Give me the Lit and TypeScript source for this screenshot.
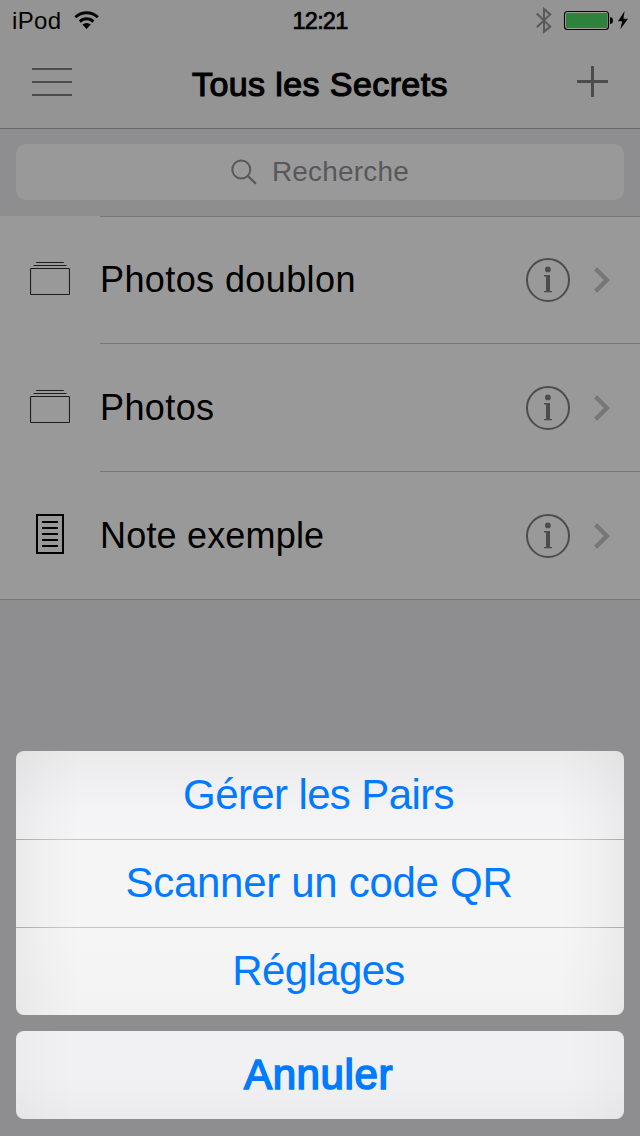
import { LitElement, html, css, svg } from "lit";
import { customElement, property } from "lit/decorators.js";

type Kind = "photos" | "note";

const photosIcon = svg`
  <path d="M6.2 .5H33.8M3.6 3.5H36.4" stroke="#1c1c1c" stroke-width="1.1" />
  <rect x=".5" y="6.5" width="39" height="26" rx=".8" fill="none" stroke="#1c1c1c" stroke-width="1.15" />`;

const noteIcon = svg`
  <rect x="7" y="1" width="26" height="38" fill="none" stroke="#000" stroke-width="2" />
  <path d="M12 8H28M12 14H28M12 20H28M12 26H28M12 32H28" stroke="#000" stroke-width="2" />`;

@customElement("status-bar")
class StatusBar extends LitElement {
  static styles = css`
    :host {
      display: grid;
      grid-template-columns: 1fr auto 1fr;
      grid-template-rows: 40px;
      align-items: center;
      height: 40px;
      padding: 0 12px;
      font-size: 24px;
      line-height: 40px;
    }
    .left, .right { display: flex; align-items: center; height: 40px; }
    .right { justify-content: flex-end; }
    .carrier { letter-spacing: 0.35px; width: 61px; padding-top: 2px; }
    .time { padding-top: 2px; font-size: 23.5px; -webkit-text-stroke: 0.7px #000; letter-spacing: -0.8px; }
    svg { display: block; }
  `;
  render() {
    return html`
      <div class="left">
        <span class="carrier">iPod</span>
        <svg width="28" height="40" viewBox="73 0 28 40">
          <g fill="none" stroke="#000" stroke-width="2.9">
            <path d="M75.4 17.3A16 16 0 0 1 97.8 17.3" />
            <path d="M79.8 21.6A9.7 9.7 0 0 1 93.4 21.6" />
          </g>
          <path d="M82.4 24.6A6 6 0 0 1 90.8 24.6L86.6 29Z" />
        </svg>
      </div>
      <span class="time">12:21</span>
      <div class="right">
        <svg width="94" height="40" viewBox="534 0 94 40">
          <path d="M536.8 13.4L550.2 26.6L544 31.8V9L550.2 14.4L536.8 27.2" fill="none" stroke="#5a5a5a" stroke-width="2.1" />
          <rect x="564.5" y="11.5" width="44" height="18" rx="3" fill="#9e9e9e" stroke="#000" stroke-width="1.1" />
          <rect x="566" y="13" width="41.5" height="15" rx="1.4" fill="#2f823c" />
          <path d="M610 17.3h1.2q1.8 .6 1.8 3.2t-1.8 3.3H610Z" />
          <path d="M624.6 11L618 21.3H622.2L620.3 29.2L628 18.7H623.4Z" />
        </svg>
      </div>
    `;
  }
}

@customElement("secret-row")
class SecretRow extends LitElement {
  @property() label = "";
  @property() kind: Kind = "photos";
  static styles = css`
    :host { display: flex; height: 128px; background: #999; }
    .thumb { width: 100px; padding: 42px 0 0 30px; box-sizing: border-box; }
    .body {
      flex: 1;
      display: flex;
      align-items: center;
      box-sizing: border-box;
      border-bottom: 1px solid #78787a;
    }
    :host([first]) .body { box-shadow: inset 0 1px #78787a; }
    :host([last]) { box-sizing: border-box; border-bottom: 1px solid #78787a; }
    :host([last]) .body { border-bottom: 0; }
    .label { flex: 1; font-size: 36px; line-height: 44px; letter-spacing: 0.4px; padding-top: 1px; }
    .label.note { letter-spacing: 0.18px; }
    svg { display: block; }
    .icon.photos { margin-top: 4px; }
    .info { margin-top: 1px; }
  `;
  render() {
    return html`
      <div class="thumb">
        <svg class="icon ${this.kind}" width="40" height="40" viewBox="0 0 40 40">
          ${this.kind === "photos" ? photosIcon : noteIcon}
        </svg>
      </div>
      <div class="body">
        <span class="label ${this.kind}">${this.label}</span>
        <svg class="info" width="114" height="44" viewBox="526 258 114 44">
          <circle cx="548" cy="280" r="21" fill="none" stroke="#4c4c4c" stroke-width="2" />
          <circle cx="547.9" cy="269.4" r="2.9" fill="#4c4c4c" />
          <path d="M544 275H550V291H552V292.2H544V291H546V276.4H544Z" fill="#4c4c4c" />
          <path d="M595.6 268.8L606.8 280L595.6 291.2" fill="none" stroke="#777779" stroke-width="4.4" />
        </svg>
      </div>
    `;
  }
}

@customElement("action-sheet")
class ActionSheet extends LitElement {
  static styles = css`
    :host { display: flex; flex-direction: column; gap: 16px; }
    .group {
      border-radius: 8px;
      overflow: hidden;
      background:
        linear-gradient(90deg, rgba(0,0,0,.042), rgba(0,0,0,.018) 28px, transparent 64px, transparent calc(100% - 64px), rgba(0,0,0,.018) calc(100% - 28px), rgba(0,0,0,.042)),
        linear-gradient(#ebebec, #f3f3f6 56px, #f5f5f6 90px, #f5f5f6 190px, #f2f2f3);
    }
    .cancel {
      background:
        linear-gradient(90deg, rgba(0,0,0,.025), transparent 56px, transparent calc(100% - 56px), rgba(0,0,0,.025)),
        linear-gradient(#f1f1f4, #f1f1f3 50%, #ebebed);
    }
    button {
      display: block;
      width: 100%;
      height: 88px;
      margin: 0;
      padding: 0 3px 0 0;
      border: 0;
      background: none;
      color: #007aff;
      font-family: inherit;
      font-size: 42px;
      line-height: 88px;
      letter-spacing: -0.62px;
    }
    button.ruled {
      background: linear-gradient(90deg, #a9a9b4, #c6c6d1 44px, #c6c6d1 calc(100% - 44px), #a9a9b4) top / 100% 1px no-repeat;
    }
    button.wide { letter-spacing: -0.3px; padding-right: 2px; }
    button.strong { -webkit-text-stroke: 1.6px #007aff; letter-spacing: 0.6px; }
  `;
  render() {
    return html`
      <div class="group">
        <button>Gérer les Pairs</button>
        <button class="ruled wide">Scanner un code QR</button>
        <button class="ruled">Réglages</button>
      </div>
      <div class="group cancel">
        <button class="strong">Annuler</button>
      </div>
    `;
  }
}

@customElement("app-root")
class AppRoot extends LitElement {
  static styles = css`
    :host {
      display: flex;
      flex-direction: column;
      position: relative;
      width: 640px;
      height: 1136px;
      overflow: hidden;
      background: #8e8e91;
      color: #000;
      font-family: "Liberation Sans", Arial, sans-serif;
    }
    .top { background: #949494; height: 128px; border-bottom: 1px solid #666; }
    .nav {
      display: grid;
      grid-template-columns: 1fr auto 1fr;
      align-items: center;
      height: 88px;
      padding: 0 32px;
    }
    .nav svg, .search svg { display: block; }
    .menu { margin-bottom: 4px; }
    .plus { justify-self: end; }
    h1 {
      margin: 0;
      font-size: 34px;
      font-weight: 400;
      line-height: 88px;
      letter-spacing: 0.4px;
      -webkit-text-stroke: 1.2px #000;
    }
    .search { height: 87px; padding: 15px 16px 16px; box-sizing: border-box; }
    .field {
      display: flex;
      align-items: center;
      justify-content: center;
      gap: 15px;
      height: 56px;
      border-radius: 10px;
      background: #999;
      color: #58585a;
      font-size: 28px;
      letter-spacing: 0.2px;
    }
    .sheet { position: absolute; left: 16px; right: 16px; bottom: 17px; }
  `;
  render() {
    return html`
      <div class="top">
        <status-bar></status-bar>
        <div class="nav">
          <svg class="menu" width="40" height="28" viewBox="0 0 40 28">
            <path d="M0 1H40M0 14H40M0 27H40" stroke="#4c4c4c" stroke-width="2" />
          </svg>
          <h1>Tous les Secrets</h1>
          <svg class="plus" width="31" height="36" viewBox="0 0 31 36">
            <path d="M0 15.5H31M15.5 0V31" stroke="#4c4c4c" stroke-width="3" />
          </svg>
        </div>
      </div>
      <div class="search">
        <div class="field">
          <svg width="26" height="26" viewBox="230.5 158.5 26 26">
            <circle cx="240.8" cy="169" r="9" fill="none" stroke="#58585a" stroke-width="2" />
            <path d="M247.3 175.5L255.4 183.3" stroke="#58585a" stroke-width="2.2" />
          </svg>
          <span>Recherche</span>
        </div>
      </div>
      <secret-row first kind="photos" label="Photos doublon"></secret-row>
      <secret-row kind="photos" label="Photos"></secret-row>
      <secret-row last kind="note" label="Note exemple"></secret-row>
      <action-sheet class="sheet"></action-sheet>
    `;
  }
}
